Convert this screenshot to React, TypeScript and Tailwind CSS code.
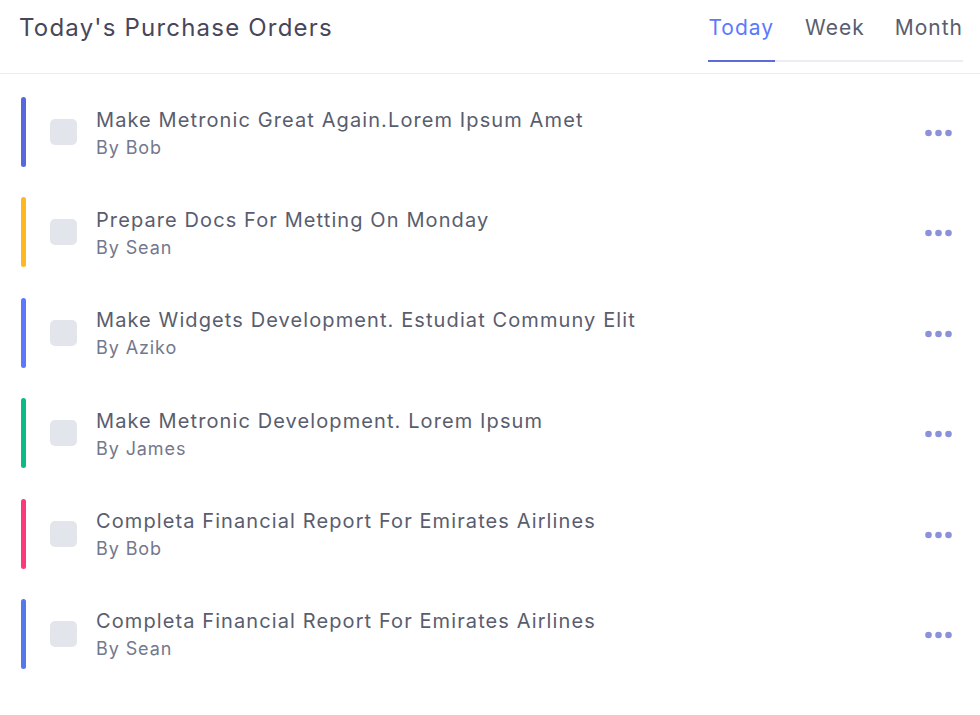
const orders = [
  { id: 1, title: "Make Metronic Great Again.Lorem Ipsum Amet", by: "Bob", bar: "bg-[#5867dd]" },
  { id: 2, title: "Prepare Docs For Metting On Monday", by: "Sean", bar: "bg-[#ffb822]" },
  { id: 3, title: "Make Widgets Development. Estudiat Communy Elit", by: "Aziko", bar: "bg-[#5d78ff]" },
  { id: 4, title: "Make Metronic Development. Lorem Ipsum", by: "James", bar: "bg-[#0abb87]" },
  { id: 5, title: "Completa Financial Report For Emirates Airlines", by: "Bob", bar: "bg-[#fd397a]" },
  { id: 6, title: "Completa Financial Report For Emirates Airlines", by: "Sean", bar: "bg-[#5578eb]" },
]

const tabs = ["Today", "Week", "Month"]

function MoreDots() {
  return (
    <svg width="27" height="8" viewBox="0 0 27 8" className="text-[#8c92d9]">
      <circle cx="3.5" cy="4" r="3.3" fill="currentColor" />
      <circle cx="13.5" cy="4" r="3.3" fill="currentColor" />
      <circle cx="23.5" cy="4" r="3.3" fill="currentColor" />
    </svg>
  )
}

export default function App() {
  return (
    <div className="w-[980px] h-[715px] bg-white font-['Inter',sans-serif] overflow-hidden">
      {/* Header */}
      <div className="flex items-start justify-between h-[74px] border-b border-[#ebedf2] pl-[19px] pr-[17px]">
        <h3 className="mt-[12px] text-[24px] leading-[32px] tracking-[1.2px] font-normal text-[#48465b]">
          Today's Purchase Orders
        </h3>
        <div className="mt-[12px] flex border-b-2 border-[#ebedf2]">
          {tabs.map((tab, i) => (
            <div
              key={tab}
              className={`-mb-[2px] pb-[16px] text-[21px] leading-[32px] tracking-[1px] border-b-2 ${
                i === 0
                  ? "border-[#5d6bd9] text-[#5d78ff] pr-[1px]"
                  : "border-transparent text-[#595d6e] ml-[30px]"
              }`}
            >
              {tab}
            </div>
          ))}
        </div>
      </div>

      {/* Orders */}
      <div className="flex flex-col gap-[30.4px] pt-[23px] pl-[21px] pr-[28px]">
        {orders.map((order) => (
          <div key={order.id} className="flex items-center h-[70px]">
            <div className={`w-[5px] h-[70px] rounded-full ${order.bar}`} />
            <div className="ml-[24px] w-[27px] h-[26px] rounded-[5px] bg-[#e2e5ec]" />
            <div className="ml-[19px] flex-1 flex flex-col pt-[2px]">
              <span className="text-[20px] leading-[28px] tracking-[1.1px] text-[#595d6e]">{order.title}</span>
              <span className="text-[18px] leading-[27px] tracking-[0.9px] text-[#74788d]">By {order.by}</span>
            </div>
            <div className="mt-[2px]">
              <MoreDots />
            </div>
          </div>
        ))}
      </div>
    </div>
  )
}
